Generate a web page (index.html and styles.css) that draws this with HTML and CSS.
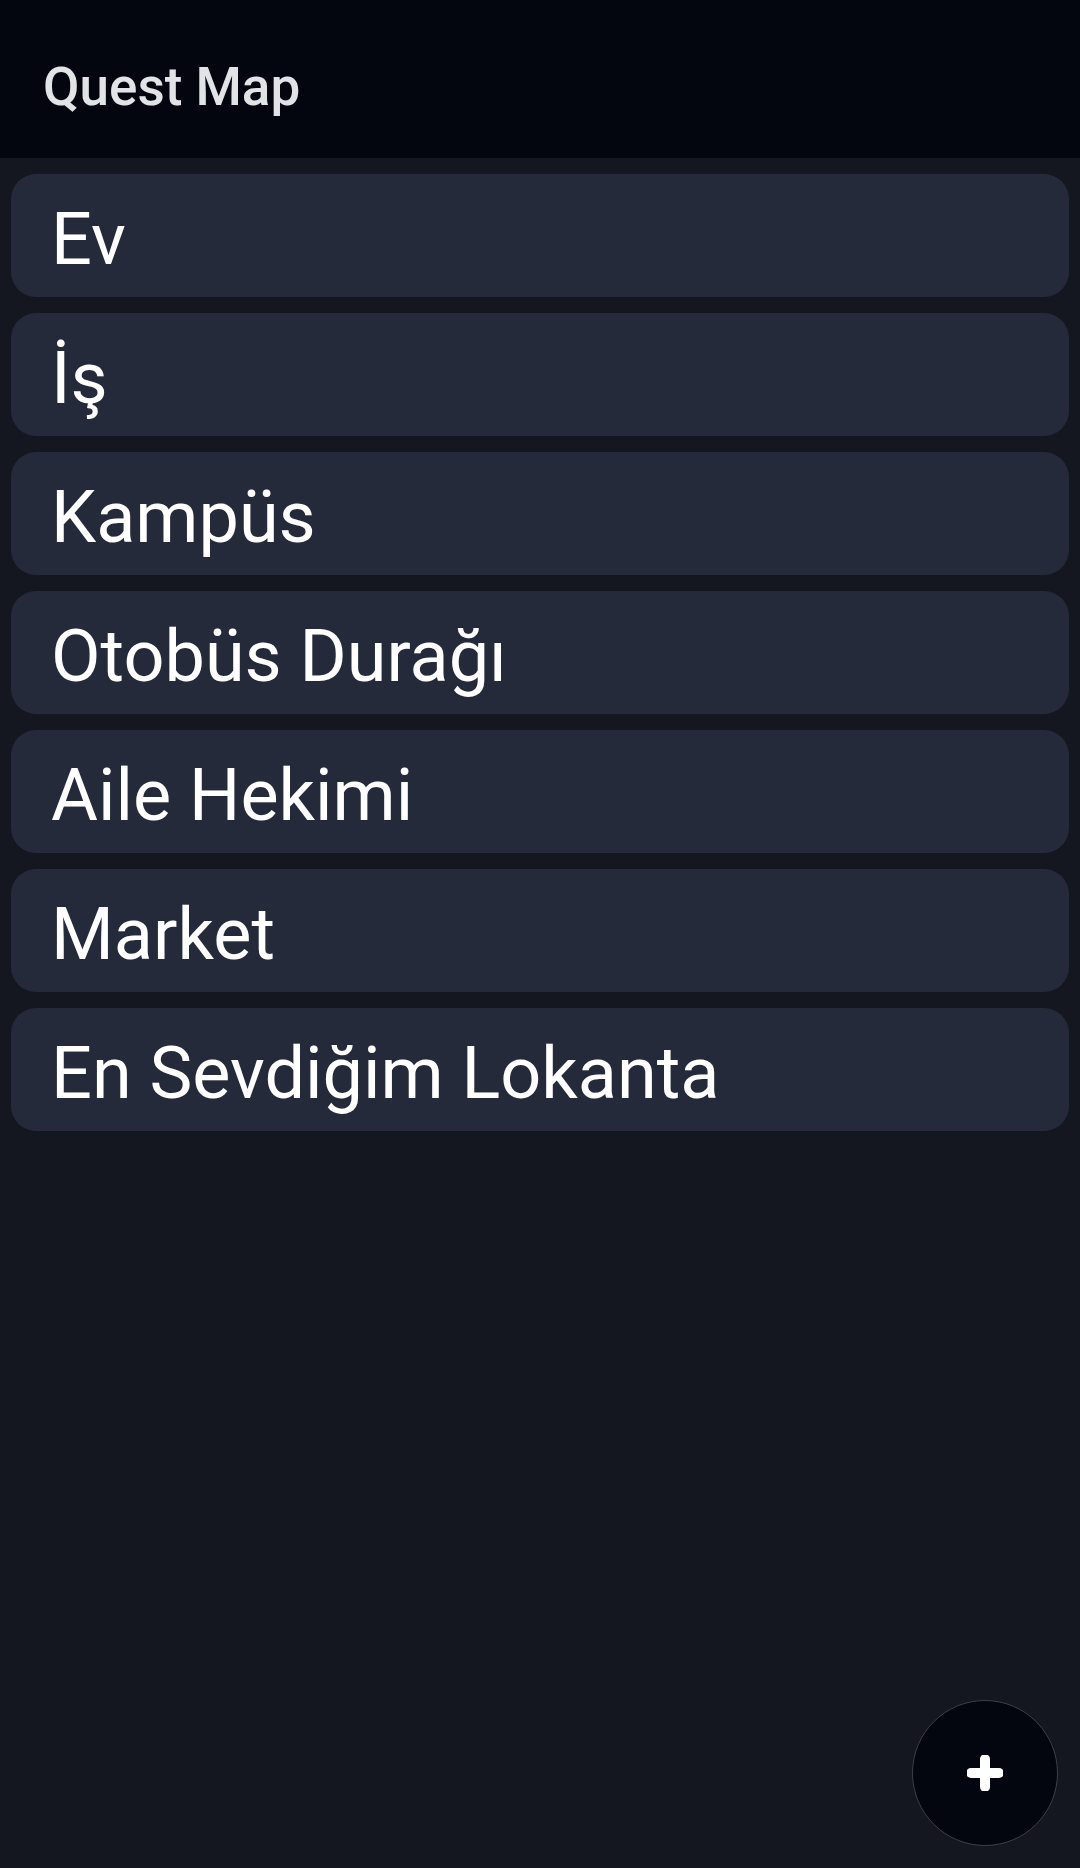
FILE: index.html
```html
<!DOCTYPE html>
<html lang="tr">
<head>
<meta charset="utf-8">
<title>Quest Map</title>
<link rel="stylesheet" href="styles.css">
</head>
<body>
<header class="app-bar">
  <h1 class="app-title">Quest Map</h1>
</header>
<main class="place-list">
  <div class="place-card">Ev</div>
  <div class="place-card">İş</div>
  <div class="place-card">Kampüs</div>
  <div class="place-card">Otobüs Durağı</div>
  <div class="place-card">Aile Hekimi</div>
  <div class="place-card">Market</div>
  <div class="place-card">En Sevdiğim Lokanta</div>
</main>
<button class="fab" aria-label="Ekle">
  <svg width="36" height="36" viewBox="0 0 36 36" aria-hidden="true">
    <path d="M18 4 V32 M4 18 H32" stroke="#ffffff" stroke-width="10" stroke-linecap="round" fill="none"/>
  </svg>
</button>
</body>
</html>
```

FILE: styles.css
```css
html, body {
  margin: 0;
  padding: 0;
}
body {
  background: #141720;
  width: 1080px;
  min-height: 1868px;
  font-family: Roboto, "Noto Sans", sans-serif;
  position: relative;
  overflow: hidden;
}
.app-bar {
  height: 158px;
  box-sizing: border-box;
  background: #03060e;
  padding: 57px 43px 0;
}
.app-title {
  margin: 0;
  font-size: 53px;
  font-weight: 500;
  color: #e1e3e7;
  line-height: 61px;
}
.place-list {
  display: flex;
  flex-direction: column;
  gap: 16px;
  padding: 16px 11px;
}
.place-card {
  height: 123px;
  box-sizing: border-box;
  background: #252a3a;
  border-radius: 25px;
  padding: 24px 40px 0;
  font-size: 72px;
  line-height: 84px;
  color: #ffffff;
  white-space: nowrap;
}
.fab {
  position: absolute;
  right: 22px;
  bottom: 22px;
  width: 146px;
  height: 146px;
  border-radius: 50%;
  background: #03060e;
  border: 1px solid #3a3f4b;
  display: flex;
  align-items: center;
  justify-content: center;
  padding: 0;
}
.fab svg {
  width: 36px;
  height: 36px;
}
```
